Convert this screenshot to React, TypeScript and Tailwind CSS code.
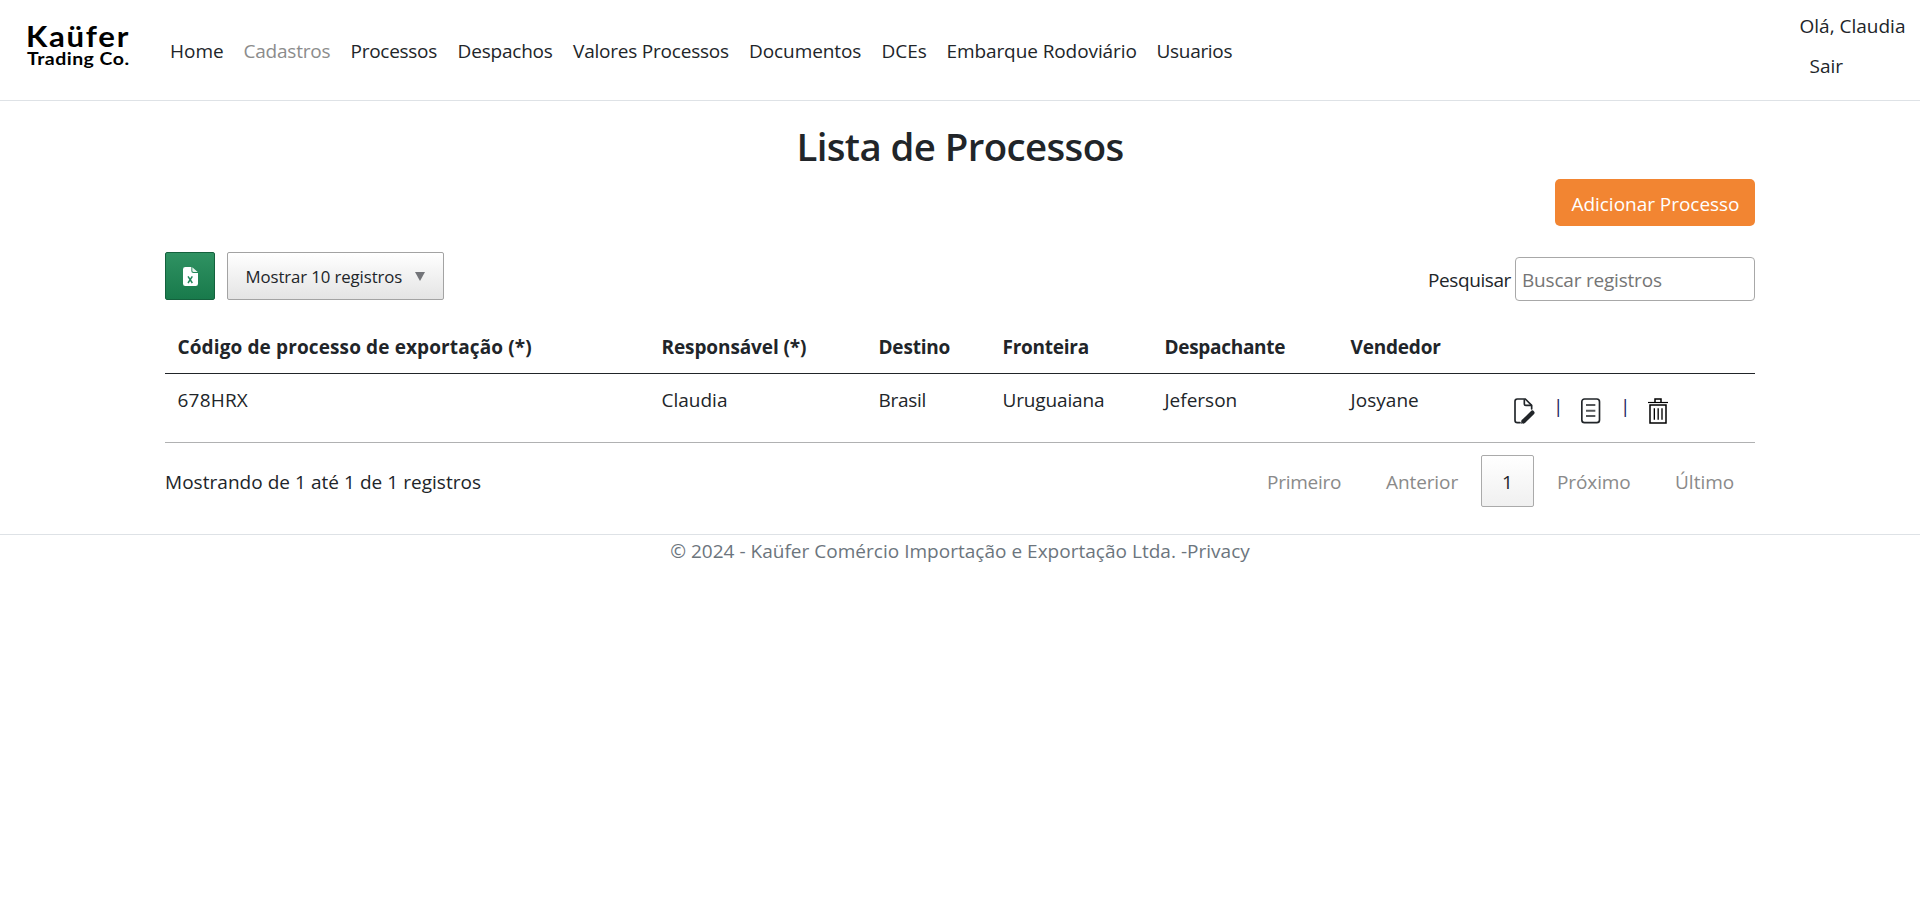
import React from "react";

const navItems = [
  { label: "Home", style: "w-[73.4px]" },
  { label: "Cadastros", style: "w-[107.2px] tracking-[-0.2px] text-[#8c8c8c]" },
  { label: "Processos", style: "w-[107px] tracking-[-0.28px]" },
  { label: "Despachos", style: "w-[115.5px] tracking-[-0.2px]" },
  { label: "Valores Processos", style: "w-[176px] tracking-[-0.22px]" },
  { label: "Documentos", style: "w-[132.4px] tracking-[-0.1px]" },
  { label: "DCEs", style: "w-[65px]" },
  { label: "Embarque Rodoviário", style: "w-[210px] tracking-[-0.09px]" },
  { label: "Usuarios", style: "tracking-[-0.3px]" },
];

const columns = [
  { head: "Código de processo de exportação (*)", value: "678HRX", width: "w-[484px]", headStyle: "tracking-[0.12px]", valueStyle: "tracking-[0.2px]" },
  { head: "Responsável (*)", value: "Claudia", width: "w-[217px]", headStyle: "tracking-[-0.1px]", valueStyle: "" },
  { head: "Destino", value: "Brasil", width: "w-[124px]", headStyle: "tracking-[-0.2px]", valueStyle: "tracking-[-0.3px]" },
  { head: "Fronteira", value: "Uruguaiana", width: "w-[162px]", headStyle: "tracking-[-0.25px]", valueStyle: "tracking-[-0.15px]" },
  { head: "Despachante", value: "Jeferson", width: "w-[186px]", headStyle: "tracking-[-0.3px]", valueStyle: "" },
  { head: "Vendedor", value: "Josyane", width: "w-[152px]", headStyle: "tracking-[-0.2px]", valueStyle: "tracking-[0.05px]" },
];

function Logo() {
  return (
    <svg width="106" height="60" viewBox="0 -10 106 60" role="img" aria-label="Kaüfer Trading Co." className="shrink-0 font-['Lato',sans-serif] font-bold">
      <text x="0" y="27" fontSize="29" letterSpacing="1.6" textLength="104" lengthAdjust="spacingAndGlyphs">Kaüfer</text>
      <text x="1" y="45" fontSize="16.5" letterSpacing="0.4" textLength="102.5" lengthAdjust="spacingAndGlyphs">Trading Co.</text>
    </svg>
  );
}

function EditIcon() {
  return (
    <svg width="21" height="26" viewBox="0 0 63 78" fill="none" stroke="#212529" strokeWidth="5">
      <path d="M18 74h-8q-7 0-7-7V10q0-7 7-7h24l19 19v11" strokeLinecap="round" />
      <path d="M31 4v13q0 5 5 5h17" />
      <path d="M29 70l26-26" strokeWidth="13" strokeLinecap="round" />
      <path d="M21 77l3-13 10 10z" fill="#212529" stroke="none" />
    </svg>
  );
}

function DocumentIcon() {
  return (
    <svg width="20" height="26" viewBox="0 0 60 78" fill="none" stroke="#212529" strokeWidth="5">
      <rect x="2.5" y="3" width="53" height="71" rx="8" />
      <path d="M15 21h28M15 38h28M15 54h28" stroke="#55585b" strokeWidth="6" />
    </svg>
  );
}

function TrashIcon() {
  return (
    <svg width="21" height="26" viewBox="0 0 63 78" fill="none" stroke="#000" strokeWidth="4.5">
      <path d="M0 13.5h60" strokeWidth="3.5" />
      <path d="M21 12V3h18v9" />
      <path d="M6 21h48v54H6z" />
      <path d="M19 31v34M30.5 31v34M42 31v34" strokeWidth="4" />
    </svg>
  );
}

function ExcelIcon() {
  return (
    <svg width="15" height="19" viewBox="0 0 45 57">
      <path d="M7 0h18v12q0 6 6 6h14v32q0 7-7 7H7q-7 0-7-7V7q0-7 7-7z" fill="#fff" />
      <path d="M28 1l16 14H32q-4 0-4-4z" fill="#e6f2ec" />
      <path d="M15 28l13 20M28 28L15 48" stroke="#21855a" strokeWidth="4.5" />
    </svg>
  );
}

export default function App() {
  return (
    <div className="min-h-screen whitespace-nowrap bg-white font-['Open_Sans','Noto_Sans',sans-serif] text-[19px] leading-[30px] text-[#212529]">
      <header className="flex h-[101px] border-b border-[#dee2e6]">
        <div className="w-[170px] shrink-0 pl-[26px] pt-2.5">
          <Logo />
        </div>
        <nav className="flex flex-1 pt-9">
          {navItems.map((item) => (
            <a key={item.label} href="#" className={item.style}>{item.label}</a>
          ))}
        </nav>
        <div className="w-[120.5px] pt-[11px]">
          <div>Olá, Claudia</div>
          <a href="#" className="mt-2.5 block pl-2.5">Sair</a>
        </div>
      </header>

      <main className="mx-auto w-[1590px] pt-[21px]">
        <h1 className="text-center text-[38.4px] font-[550] leading-[49px] tracking-[-0.6px]">Lista de Processos</h1>
        <div className="mt-2 flex justify-end">
          <button className="h-[47px] w-[200px] rounded-[5px] bg-[#f28532] pl-px pt-0.5 tracking-[-0.03px] text-white">Adicionar Processo</button>
        </div>

        <div className="mt-[26px] flex h-[49px] items-start">
          <button className="flex h-12 w-[50px] items-center justify-center rounded-[2px] border border-[#14613d] bg-linear-to-b from-[#2f9262] to-[#187a4b]">
            <ExcelIcon />
          </button>
          <button className="ml-3 flex h-12 w-[217px] items-center rounded-[2px] border border-[#a3a3a3] bg-linear-to-b from-white to-[#e4e4e4] pl-[17.5px] text-[16.8px] tracking-[-0.1px]">
            <span className="w-[169.5px] pt-0.5 text-left">Mostrar 10 registros</span>
            <svg width="10" height="9" viewBox="0 0 10 9"><path d="M0 0h10L5 9z" fill="#737579" /></svg>
          </button>
          <label className="ml-auto flex items-center pt-[5px]">
            <span className="mr-1 pt-0.5 tracking-[-0.4px]">Pesquisar</span>
            <input className="h-11 w-60 rounded-[4px] border border-[#a8a8a8] px-[6px] pt-0.5 tracking-[-0.2px] placeholder:text-[#757575]" placeholder="Buscar registros" />
          </label>
        </div>

        <table className="mt-[18px] w-full table-fixed border-collapse text-left">
          <thead>
            <tr className="h-[54.5px] border-b border-[#212529]">
              {columns.map((c) => (
                <th key={c.head} className={`${c.width} pl-[12.5px] pt-px align-middle font-bold`}>
                  <span className={c.headStyle}>{c.head}</span>
                </th>
              ))}
              <th />
            </tr>
          </thead>
          <tbody>
            <tr className="h-[69px] border-b border-[#b0b1b2]">
              {columns.map((c) => (
                <td key={c.head} className="pl-[12.5px] pt-[11px] align-top">
                  <span className={c.valueStyle}>{c.value}</span>
                </td>
              ))}
              <td className="align-top">
                <div className="flex pl-6 pt-6">
                  <a href="#" className="w-[39px]"><EditIcon /></a>
                  <span className="-mt-[7px] w-7 text-[#21205c]">|</span>
                  <a href="#" className="w-[39px]"><DocumentIcon /></a>
                  <span className="-mt-[7px] w-7 text-[#21205c]">|</span>
                  <a href="#"><TrashIcon /></a>
                </div>
              </td>
            </tr>
          </tbody>
        </table>

        <div className="flex h-[91px] items-start pt-3">
          <div className="pt-3 tracking-[0.04px]">Mostrando de 1 até 1 de 1 registros</div>
          <div className="ml-auto flex h-[52px] items-center text-[#8a8a8a]">
            <span className="w-[119px] pt-0.5 tracking-[-0.25px]">Primeiro</span>
            <span className="w-[95px] pt-0.5 tracking-[-0.1px]">Anterior</span>
            <span className="flex h-[52px] w-[53px] items-center justify-center rounded-[2px] border border-[#aaa] bg-linear-to-b from-white to-[#f0f0f0] pt-0.5 text-[#212529]">1</span>
            <span className="ml-[23px] w-[118px] pt-0.5 tracking-[-0.1px]">Próximo</span>
            <span className="w-20 pt-0.5">Último</span>
          </div>
        </div>
      </main>

      <footer className="border-t border-[#dee2e6] pt-px text-center tracking-[0.02px] text-[#6c757d]">
        © 2024 - Kaüfer Comércio Importação e Exportação Ltda. -<a href="#">Privacy</a>
      </footer>
    </div>
  );
}
